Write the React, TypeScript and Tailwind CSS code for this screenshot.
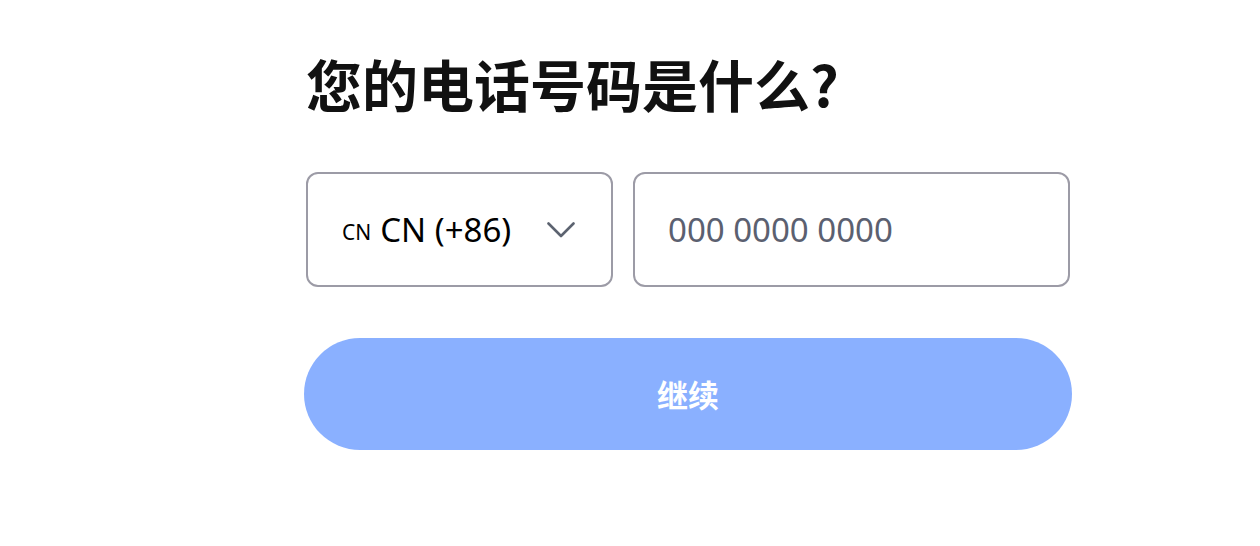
export default function App() {
  return (
    <div className="min-h-[546px] w-full bg-white font-['Noto_Sans','Noto_Sans_CJK_SC',sans-serif]">
      <div className="ml-[304px] w-[768px] pt-[55px]">
        <h1 className="ml-[2px] text-[56px] font-bold leading-none text-[#111111] font-['Noto_Sans_CJK_SC',sans-serif]">
          您的电话号码是什么?
        </h1>

        <div className="mt-[61px] ml-[2px] flex gap-[20px]">
          <button className="flex h-[115px] w-[307px] items-center rounded-[12px] border-2 border-[#9c9ba6] bg-white pl-[34px] pr-[36px] font-['Noto_Sans',sans-serif]">
            <span className="mr-[9px] mt-[5px] text-[21px] leading-none text-black">CN</span>
            <span className="text-[33px] leading-none text-black">CN (+86)</span>
            <svg className="ml-auto" width="28" height="16" viewBox="0 0 28 16" fill="none">
              <polyline points="1.5,1.5 14,14 26.5,1.5" stroke="#5c6370" strokeWidth="2.6" strokeLinecap="round" strokeLinejoin="round" />
            </svg>
          </button>
          <div className="mr-[2px] flex h-[115px] flex-1 items-center rounded-[12px] border-2 border-[#9c9ba6] bg-white pl-[33px]">
            <span className="text-[33px] leading-none text-[#5b6070]">000 0000 0000</span>
          </div>
        </div>

        <button className="mt-[51px] flex h-[112px] w-full items-center justify-center rounded-full bg-[#8ab0ff]">
          <span className="text-[31px] font-bold text-white font-['Noto_Sans_CJK_SC',sans-serif]">继续</span>
        </button>
      </div>
    </div>
  )
}
